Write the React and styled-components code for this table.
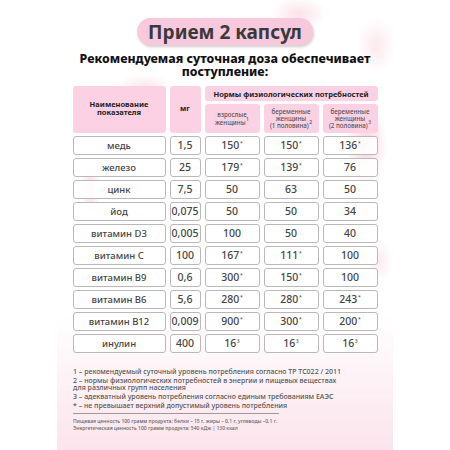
import React from 'react';
import styled, { createGlobalStyle } from 'styled-components';

const Global = createGlobalStyle`
  html, body {
    margin: 0;
    padding: 0;
    background: #fff;
  }
  * { box-sizing: border-box; }
`;

const Page = styled.div`
  width: 450px;
  height: 450px;
  background: #fff;
  overflow: hidden;
`;

const Poster = styled.div`
  width: 336px;
  height: 450px;
  margin: 0 auto;
  padding-top: 18px;
  font-family: 'Noto Sans', 'Open Sans', sans-serif;
  color: #3d3d3d;
  display: flex;
  flex-direction: column;
  align-items: center;
  background:
    radial-gradient(ellipse 30px 60px at 92% 32%, rgba(246, 170, 195, 0.55), transparent 70%),
    radial-gradient(ellipse 40px 24px at 72% 3%, rgba(246, 190, 205, 0.45), transparent 70%),
    radial-gradient(ellipse 28px 40px at 95% 10%, rgba(246, 190, 205, 0.35), transparent 70%),
    radial-gradient(ellipse 14px 40px at 10% 42%, rgba(246, 170, 195, 0.45), transparent 70%),
    radial-gradient(ellipse 40px 16px at 26% 19%, rgba(246, 190, 205, 0.35), transparent 70%),
    radial-gradient(ellipse 20px 30px at 96% 58%, rgba(246, 190, 205, 0.3), transparent 70%),
    linear-gradient(to bottom, #fff 0%, #fff 70%, #fbe4ec 100%);
`;

const Pill = styled.div`
  width: 176px;
  height: 27px;
  border-radius: 14px;
  background: #f8c9dc;
  box-shadow: 1px 2px 3px rgba(120, 80, 90, 0.3);
  display: flex;
  align-items: center;
  justify-content: center;
  font-size: 19px;
  font-weight: 700;
  color: #3a3a3a;
`;

const Subtitle = styled.h2`
  margin: 7px 0 0;
  font-size: 12.3px;
  line-height: 13px;
  font-weight: 800;
  color: #111;
  text-align: center;
`;

const Table = styled.div`
  margin-top: 8px;
  display: grid;
  grid-template-columns: 93px 31px 55px 55px 55px;
  grid-template-rows: 15px 29px repeat(10, 19px);
  column-gap: 4px;
  row-gap: 3px;
`;

const Head = styled.div`
  background: #fcd1e3;
  border-radius: 3px;
  display: flex;
  align-items: center;
  justify-content: center;
  text-align: center;
  font-size: ${p => (p.sub ? '6.2px' : '7.5px')};
  line-height: ${p => (p.sub ? '7.2px' : '8px')};
  font-weight: ${p => (p.sub ? 500 : 700)};
  color: ${p => (p.sub ? '#555' : '#222')};
  grid-row: ${p => p.row || 'auto'};
  grid-column: ${p => p.col || 'auto'};
  padding-bottom: ${p => (p.tall ? '4px' : '0')};
`;

const Cell = styled.div`
  background: rgba(255, 255, 255, 0.88);
  border: 1px solid #b9b9b9;
  border-radius: 3px;
  display: flex;
  align-items: center;
  justify-content: center;
  font-size: ${p => (p.name ? '9.5px' : '10.5px')};
  font-weight: 500;
  color: #454545;
  padding-bottom: 1px;
  white-space: nowrap;
`;

const Sup = styled.sup`
  font-size: 5px;
  line-height: 0;
  vertical-align: 4px;
  margin-left: 0.5px;
`;

const Notes = styled.div`
  width: 304px;
  margin-top: 15px;
  font-size: 7px;
  line-height: 7px;
  font-weight: 500;
  color: #555;
`;

const Note = styled.p`
  margin: 0 0 2px;
`;

const Rule = styled.div`
  width: 206px;
  height: 1px;
  background: #9a9a9a;
  margin: 4px 0 4px;
`;

const Small = styled.p`
  margin: 0;
  font-size: 5px;
  line-height: 7px;
  color: #666;
`;

const rows = [
  ['медь', '1,5', ['150', '*'], ['150', '*'], ['136', '*']],
  ['железо', '25', ['179', '*'], ['139', '*'], ['76']],
  ['цинк', '7,5', ['50'], ['63'], ['50']],
  ['йод', '0,075', ['50'], ['50'], ['34']],
  ['витамин D3', '0,005', ['100'], ['50'], ['40']],
  ['витамин C', '100', ['167', '*'], ['111', '*'], ['100']],
  ['витамин B9', '0,6', ['300', '*'], ['150', '*'], ['100']],
  ['витамин B6', '5,6', ['280', '*'], ['280', '*'], ['243', '*']],
  ['витамин B12', '0,009', ['900', '*'], ['300', '*'], ['200', '*']],
  ['инулин', '400', ['16', '3'], ['16', '3'], ['16', '3']],
];

function Value({ v }) {
  return (
    <Cell>
      <span>
        {v[0]}
        {v[1] && <Sup>{v[1]}</Sup>}
      </span>
    </Cell>
  );
}

export default function App() {
  return (
    <Page>
      <Global />
      <Poster>
        <Pill>Прием 2 капсул</Pill>
        <Subtitle>
          Рекомендуемая суточная доза обеспечивает
          <br />
          поступление:
        </Subtitle>
        <Table>
          <Head row="1 / 3" col="1" tall>Наименование<br />показателя</Head>
          <Head row="1 / 3" col="2" tall>мг</Head>
          <Head row="1" col="3 / 6">Нормы физиологических потребностей</Head>
          <Head sub row="2" col="3">
            <span>взрослые<br />женщины<Sup>1</Sup></span>
          </Head>
          <Head sub row="2" col="4">
            <span>беременные<br />женщины<br />(1 половина)<Sup>2</Sup></span>
          </Head>
          <Head sub row="2" col="5">
            <span>беременные<br />женщины<br />(2 половина)<Sup>3</Sup></span>
          </Head>
          {rows.map((r, i) => (
            <React.Fragment key={i}>
              <Cell name>{r[0]}</Cell>
              <Cell>{r[1]}</Cell>
              <Value v={r[2]} />
              <Value v={r[3]} />
              <Value v={r[4]} />
            </React.Fragment>
          ))}
        </Table>
        <Notes>
          <Note>1 – рекомендуемый суточный уровень потребления согласно ТР ТС022 / 2011</Note>
          <Note>
            2 – нормы физиологических потребностей в энергии и пищевых веществах
            <br />
            для различных групп населения
          </Note>
          <Note>3 – адекватный уровень потребления согласно единым требованиям ЕАЭС</Note>
          <Note>* – не превышает верхний допустимый уровень потребления</Note>
          <Rule />
          <Small>Пищевая ценность 100 грамм продукта: белки – 15 г, жиры – 0,1 г, углеводы –0,1 г.</Small>
          <Small>Энергетическая ценность 100 грамм продукта: 540 кДж | 130 ккал</Small>
        </Notes>
      </Poster>
    </Page>
  );
}
